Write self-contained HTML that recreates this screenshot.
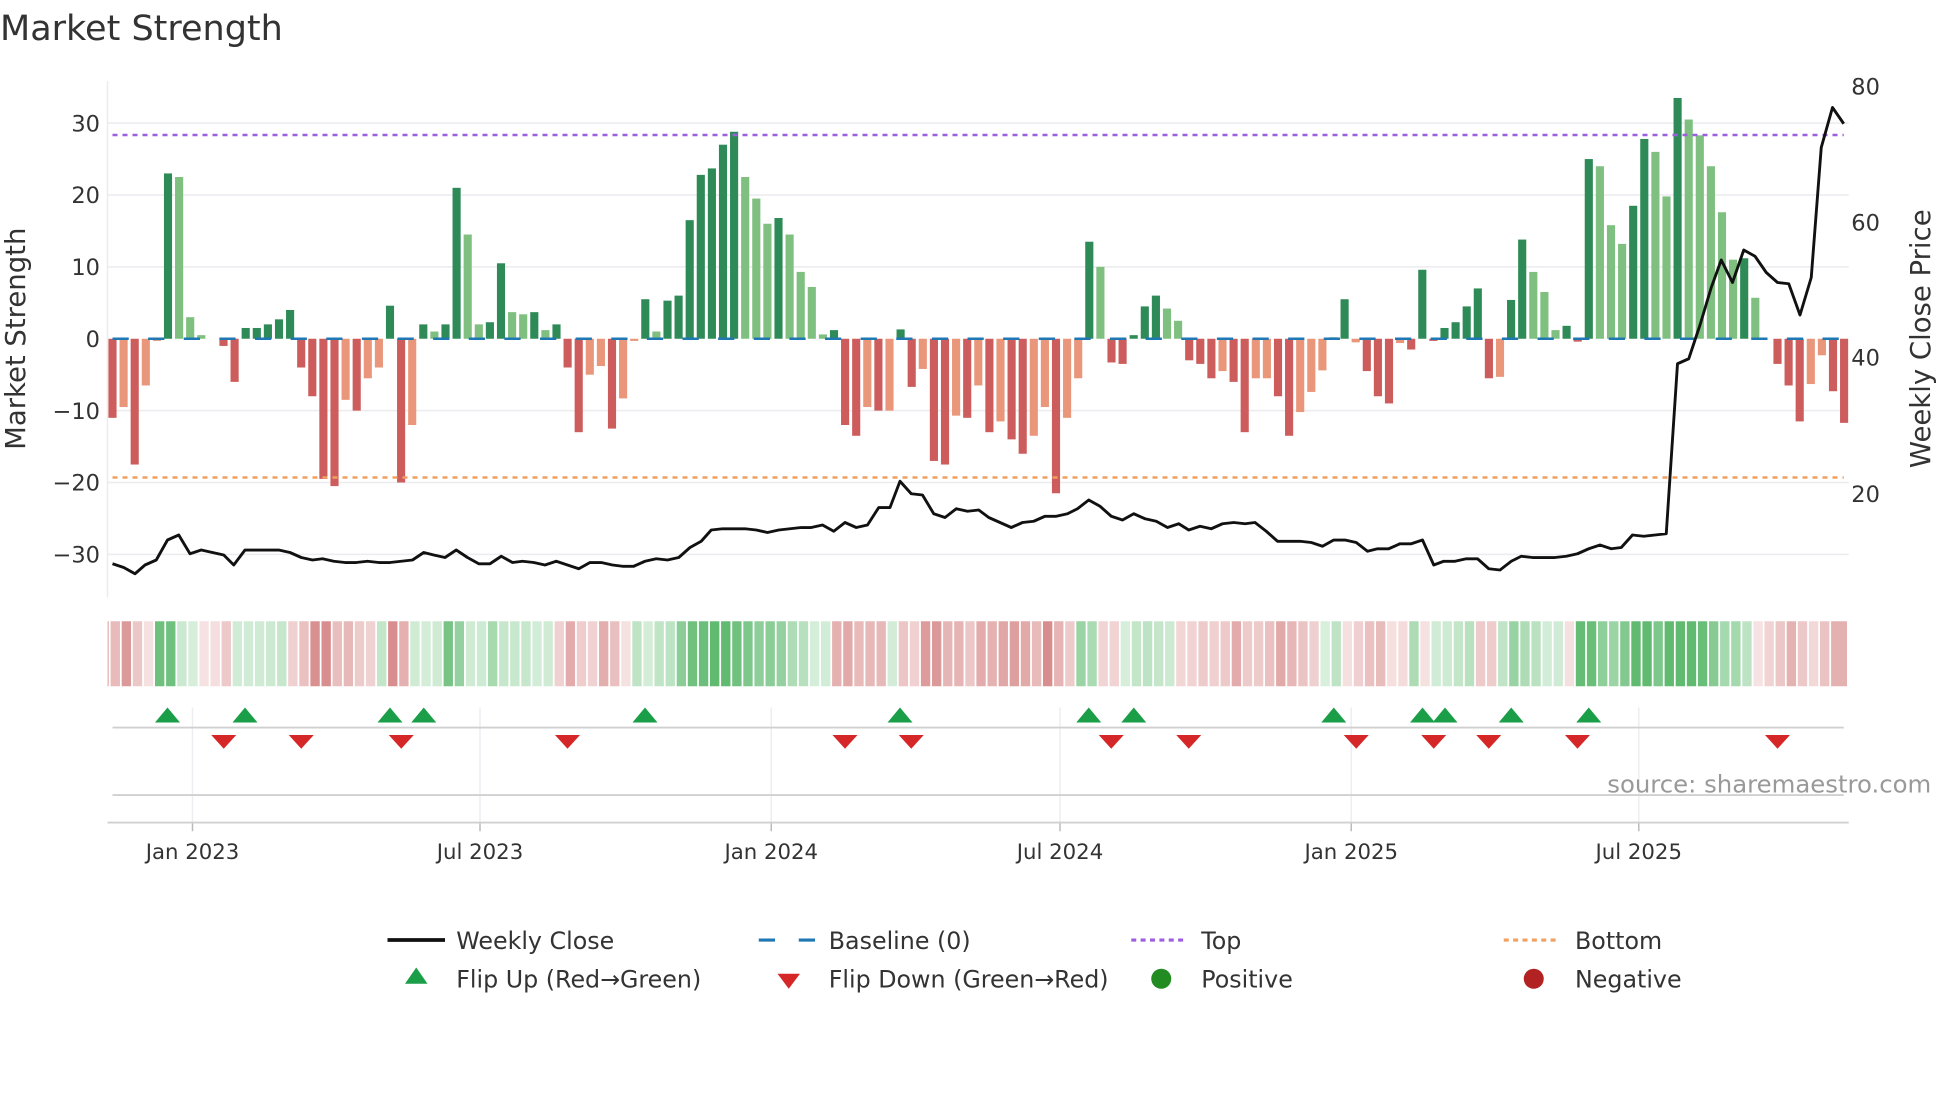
<!DOCTYPE html>
<html><head><meta charset="utf-8"><style>
html,body{margin:0;padding:0;background:#fff;width:1960px;height:1102px;overflow:hidden}
svg{display:block}
text{font-family:"DejaVu Sans","Liberation Sans",sans-serif;fill:#333}
</style></head><body>
<svg id="s" width="1960" height="1102" viewBox="0 0 1568 881.6" xmlns="http://www.w3.org/2000/svg">
<text x="0" y="32" font-size="28">Market Strength</text>
<g id="grid"></g>
<g id="bars"></g>
<g id="over"></g>
</svg>
<script>
var NS="http://www.w3.org/2000/svg";
function el(t,a,p,txt){var e=document.createElementNS(NS,t);for(var k in a)e.setAttribute(k,a[k]);if(txt!==undefined)e.textContent=txt;(p||document.getElementById('s')).appendChild(e);return e;}
var G=document.getElementById('grid'),B=document.getElementById('bars'),O=document.getElementById('over');
var vals="d-11 l-9.5 d-17.5 l-6.5 l-0.3 d23 l22.5 l3 l0.5 n0 d-1 d-6 d1.5 d1.5 d2 d2.7 d4 d-4 d-8 d-19.5 d-20.5 l-8.5 d-10 l-5.5 l-4 d4.6 d-20 l-12 d2 l1 d2 d21 l14.5 l2 d2.3 d10.5 l3.7 l3.4 d3.7 l1.2 d2 d-4 d-13 l-5 l-3.8 d-12.5 l-8.3 l-0.3 d5.5 l1 d5.3 d6 d16.5 d22.8 d23.7 d27 d28.8 l22.5 l19.5 l16 d16.8 l14.5 l9.3 l7.2 l0.6 d1.2 d-12 d-13.5 l-9.5 d-10 l-10 d1.3 d-6.7 l-4.2 d-17 d-17.5 l-10.7 d-11 l-6.5 d-13 l-11.5 d-14 d-16 l-13.5 l-9.5 d-21.5 l-11 l-5.5 d13.5 l10 d-3.3 d-3.5 d0.5 d4.5 d6 l4.2 l2.5 d-3 d-3.5 d-5.5 l-4.5 d-6 d-13 l-5.5 l-5.5 d-8 d-13.5 l-10.2 l-7.4 l-4.4 d0.2 d5.5 l-0.5 d-4.5 d-8 d-9 l-0.6 d-1.5 d9.6 d-0.3 d1.5 d2.3 d4.5 d7 d-5.5 l-5.3 d5.4 d13.8 l9.3 l6.5 l1.2 d1.8 d-0.4 d25 l24 l15.8 l13.2 d18.5 d27.8 l26 l19.8 d33.5 l30.5 l28.3 l24 l17.6 l11 d11.2 l5.7 n0 d-3.5 d-6.5 d-11.5 l-6.3 l-2.3 d-7.3 d-11.7".split(" ");
var step=8.88,x0=90;
function X(i){return x0+step*i;}
function Y(v){return 271-5.75*v;}
[30,20,10,-10,-20,-30].forEach(function(v){el('line',{x1:86,x2:1479,y1:Y(v),y2:Y(v),stroke:'#ececf0','stroke-width':1.2},G);});
el('line',{x1:86,x2:86,y1:65,y2:478,stroke:'#ececf0','stroke-width':1.2},G);
[30,20,10,0,-10,-20,-30].forEach(function(v){el('text',{x:80,y:Y(v)+6.5,'font-size':18,'text-anchor':'end'},G,(v<0?'\u2212'+(-v):''+v));});
[[80,69],[60,178],[40,286],[20,395]].forEach(function(a){el('text',{x:1481,y:a[1]+6.5,'font-size':18},G,''+a[0]);});
el('text',{x:0,y:0,'font-size':22,'text-anchor':'middle',transform:'translate(20,271) rotate(-90)'},G,'Market Strength');
el('text',{x:0,y:0,'font-size':22,'text-anchor':'middle',transform:'translate(1544,271) rotate(-90)'},G,'Weekly Close Price');
var col={dp:'#2e8b57',lp:'#7fbf7f',dn:'#cd5c5c',ln:'#e9967a'};
vals.forEach(function(s,i){var t=s[0],v=parseFloat(s.slice(1));if(t=='n'||v==0)return;var c=v>0?(t=='d'?col.dp:col.lp):(t=='d'?col.dn:col.ln);
var y=v>0?Y(v):271,h=Math.abs(v)*5.75;el('rect',{x:X(i)-3.25,y:y,width:6.5,height:h,fill:c},B);});
el('line',{x1:90,x2:1475,y1:271,y2:271,stroke:'#1f77b4','stroke-width':2,'stroke-dasharray':'13 15.5'},O);
el('line',{x1:90,x2:1475,y1:108,y2:108,stroke:'#9b5fe0','stroke-width':2,'stroke-dasharray':'4 4'},O);
el('line',{x1:90,x2:1475,y1:382,y2:382,stroke:'#f0a060','stroke-width':2,'stroke-dasharray':'4 4'},O);
var pr=[[90,451],[99,454],[108,459],[116,452],[125,448],[134,432],[143,428],[152,443],[161,440],[170,442],[179,444],[187,452],[196,440],[205,440],[214,440],[223,440],[232,442],[241,446],[250,448],[258,447],[267,449],[276,450],[285,450],[294,449],[303,450],[312,450],[321,449],[330,448],[339,442],[347,444],[356,446],[365,440],[374,446],[383,451],[392,451],[401,445],[410,450],[418,449],[427,450],[436,452],[445,449],[454,452],[463,455],[472,450],[481,450],[490,452],[498,453],[507,453],[516,449],[525,447],[534,448],[543,446],[552,438],[561,433],[569,424],[578,423],[587,423],[596,423],[605,424],[614,426],[623,424],[632,423],[641,422],[649,422],[658,420],[667,425],[676,418],[685,422],[694,420],[703,406],[712,406],[720,385],[729,395],[738,396],[747,411],[756,414],[765,407],[774,409],[783,408],[791,414],[800,418],[809,422],[818,418],[827,417],[836,413],[845,413],[854,411],[862,407],[871,400],[880,405],[889,413],[898,416],[907,411],[916,415],[925,417],[934,422],[943,419],[951,424],[960,421],[969,423],[978,419],[987,418],[996,419],[1004,418],[1013,425],[1022,433],[1031,433],[1040,433],[1049,434],[1058,437],[1067,432],[1076,432],[1085,434],[1094,441],[1102,439],[1111,439],[1120,435],[1129,435],[1138,432],[1147,452],[1155,449],[1164,449],[1173,447],[1182,447],[1191,455],[1200,456],[1209,449],[1217,445],[1226,446],[1235,446],[1244,446],[1253,445],[1262,443],[1271,439],[1280,436],[1289,439],[1297,438],[1306,428],[1315,429],[1324,428],[1333,427],[1342,291],[1351,287],[1360,260],[1369,230],[1377,208],[1386,226],[1395,200],[1404,205],[1413,218],[1422,226],[1431,227],[1440,252],[1449,222],[1457,118],[1466,86],[1475,99]];
el('polyline',{points:pr.map(function(p){return p.join(',');}).join(' '),fill:'none',stroke:'#111','stroke-width':2.3,'stroke-linejoin':'round'},O);
function mix(a,b,t){return 'rgb('+[0,1,2].map(function(k){return Math.round(a[k]+(b[k]-a[k])*t);}).join(',')+')';}
vals.forEach(function(s,i){var v=parseFloat(s.slice(1));var l=79.6+step*i,r=l+step;if(i==vals.length-1)r=1479;if(l<86)l=86;if(r<=l)return;
var c;if(v>0){c=mix([216,239,220],[96,186,112],Math.min(1,v/26));}else{c=mix([246,226,226],[216,142,142],Math.min(1,-v/20));}
el('rect',{x:l,y:497,width:Math.max(0,r-l-1.4),height:52,fill:c},O);});
var ticks=[[154,'Jan 2023'],[384,'Jul 2023'],[617,'Jan 2024'],[848,'Jul 2024'],[1081,'Jan 2025'],[1311,'Jul 2025']];
ticks.forEach(function(t){el('line',{x1:t[0],x2:t[0],y1:566,y2:658,stroke:'#eceef2','stroke-width':1.2},O);
el('line',{x1:t[0],x2:t[0],y1:658,y2:665,stroke:'#bbb','stroke-width':1.2},O);
el('text',{x:t[0],y:687,'font-size':17,'text-anchor':'middle'},O,t[1]);});
el('line',{x1:90,x2:1475,y1:582,y2:582,stroke:'#d0d0d0','stroke-width':1.5},O);
el('line',{x1:90,x2:1475,y1:636,y2:636,stroke:'#d0d0d0','stroke-width':1.5},O);
el('line',{x1:86,x2:1479,y1:658,y2:658,stroke:'#d0d0d0','stroke-width':1.5},O);
[134,196,312,339,516,720,871,907,1067,1138,1156,1209,1271].forEach(function(x){el('polygon',{points:(x-10)+',578 '+(x+10)+',578 '+x+',566',fill:'#1a9e48'},O);});
[179,241,321,454,676,729,889,951,1085,1147,1191,1262,1422].forEach(function(x){el('polygon',{points:(x-10)+',588 '+(x+10)+',588 '+x+',599',fill:'#d62728'},O);});
el('text',{x:1545,y:634,'font-size':19.5,'text-anchor':'end',style:'fill:#999'},O,'source: sharemaestro.com');
el('line',{x1:310,x2:356,y1:752,y2:752,stroke:'#111','stroke-width':3},O);
el('text',{x:365,y:759,'font-size':19},O,'Weekly Close');
el('line',{x1:607,x2:652,y1:752,y2:752,stroke:'#1f77b4','stroke-width':2.5,'stroke-dasharray':'13 19'},O);
el('text',{x:663,y:759,'font-size':19},O,'Baseline (0)');
el('line',{x1:905,x2:950,y1:752,y2:752,stroke:'#9b5fe0','stroke-width':2.5,'stroke-dasharray':'4 3.5'},O);
el('text',{x:961,y:759,'font-size':19},O,'Top');
el('line',{x1:1203,x2:1248,y1:752,y2:752,stroke:'#f0a060','stroke-width':2.5,'stroke-dasharray':'4 3.5'},O);
el('text',{x:1260,y:759,'font-size':19},O,'Bottom');
el('polygon',{points:'324,787 342,787 333,774',fill:'#1a9e48'},O);
el('text',{x:365,y:790,'font-size':19},O,'Flip Up (Red\u2192Green)');
el('polygon',{points:'622,779 640,779 631,791',fill:'#d62728'},O);
el('text',{x:663,y:790,'font-size':19},O,'Flip Down (Green\u2192Red)');
el('circle',{cx:929,cy:783,r:8,fill:'#228b22'},O);
el('text',{x:961,y:790,'font-size':19},O,'Positive');
el('circle',{cx:1227,cy:783,r:8,fill:'#b22222'},O);
el('text',{x:1260,y:790,'font-size':19},O,'Negative');
</script>
</body></html>
